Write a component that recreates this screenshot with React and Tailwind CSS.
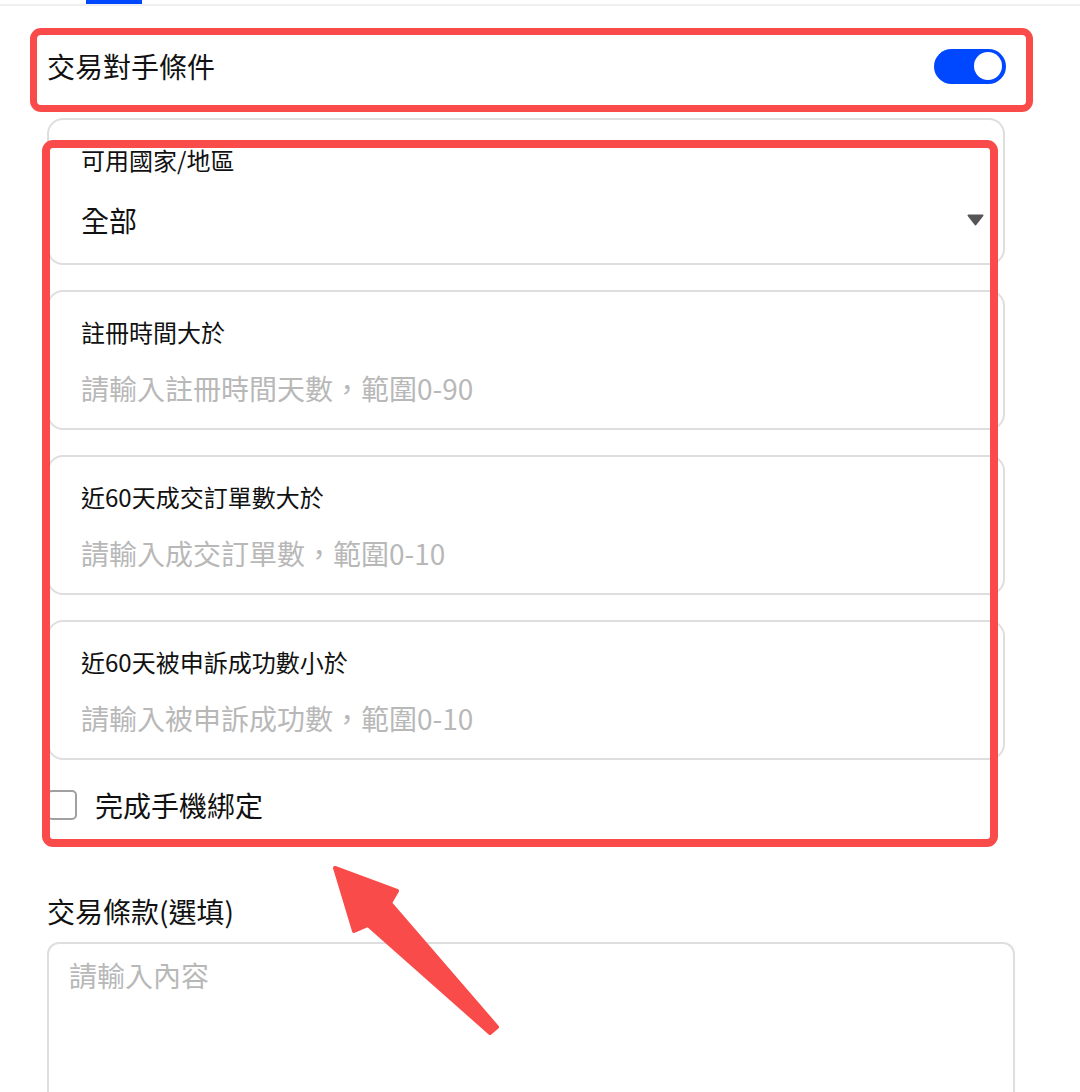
import { useState } from 'react';

const font = { fontFamily: '"Noto Sans CJK TC", "Noto Sans", sans-serif' };

function Field({ label, placeholder }) {
  return (
    <div className="border-2 border-[#dedede] rounded-[16px] px-[32px] pt-[24px] pb-[20px]">
      <div className="text-[24px] leading-[32px] text-[#111]">{label}</div>
      <input
        type="text"
        placeholder={placeholder}
        className="mt-[20px] block w-full h-[40px] text-[28px] leading-[40px] text-[#111] placeholder:text-[#b8b8b8] outline-none bg-transparent"
      />
    </div>
  );
}

export default function App() {
  const [on, setOn] = useState(true);
  const [bound, setBound] = useState(false);

  return (
    <div className="relative w-[1080px] h-[1092px] overflow-hidden bg-white" style={font}>
      {/* tab underline */}
      <div className="relative h-[6px] border-b-2 border-[#f0f0f0]">
        <div className="absolute left-[86px] top-0 w-[56px] h-[4px] bg-[#0048ff]" />
      </div>

      <div className="pl-[47px]">
        <div className="mt-[32px] h-[56px] flex items-center justify-between pr-[74px]">
          <span className="text-[28px] text-[#111]">交易對手條件</span>
          <button
            onClick={() => setOn(!on)}
            className={`w-[72px] h-[35px] rounded-full flex items-center px-[4px] ${on ? 'bg-[#0048ff] justify-end' : 'bg-[#ccc] justify-start'}`}
          >
            <span className="w-[28px] h-[28px] rounded-full bg-white" />
          </button>
        </div>

        <div className="w-[958px] mt-[24px] flex flex-col gap-[25px]">
          <div className="border-2 border-[#dedede] rounded-[16px] px-[32px] pt-[24px] pb-[23px]">
            <div className="text-[24px] leading-[32px] text-[#111]">可用國家/地區</div>
            <div className="mt-[24px] h-[40px] flex items-center justify-between">
              <span className="text-[28px] leading-[40px] text-[#111]">全部</span>
              <svg width="17" height="12" viewBox="0 0 17 12" className="mr-[-13px]">
                <path d="M1.5 1.5 H15.5 L8.5 10.5 Z" fill="#555" stroke="#555" strokeWidth="2" strokeLinejoin="round" />
              </svg>
            </div>
          </div>
          <Field label="註冊時間大於" placeholder="請輸入註冊時間天數，範圍0-90" />
          <Field label="近60天成交訂單數大於" placeholder="請輸入成交訂單數，範圍0-10" />
          <Field label="近60天被申訴成功數小於" placeholder="請輸入被申訴成功數，範圍0-10" />
        </div>

        <label className="mt-[30px] flex items-center h-[30px] cursor-pointer">
          <span
            onClick={() => setBound(!bound)}
            className={`w-[30px] h-[30px] rounded-[5px] border-2 ${bound ? 'border-[#0048ff] bg-[#0048ff]' : 'border-[#a0a0a0] bg-white'}`}
          />
          <span className="ml-[18px] text-[28px] text-[#111]">完成手機綁定</span>
        </label>

        <div className="mt-[71px] text-[28px] leading-[40px] text-[#111]">交易條款(選填)</div>
        <div className="mt-[11px] w-[968px] h-[200px] border-2 border-[#dedede] rounded-[12px] px-[20px] pt-[11px]">
          <textarea
            placeholder="請輸入內容"
            className="block w-full h-full resize-none text-[28px] leading-[40px] text-[#111] placeholder:text-[#b8b8b8] outline-none"
          />
        </div>
      </div>

      {/* annotations */}
      <div className="absolute left-[30px] top-[28px] w-[1003px] h-[84px] border-[7px] border-[#f84b4a] rounded-[11px] pointer-events-none" />
      <div className="absolute left-[42px] top-[140px] w-[956px] h-[707px] border-[8px] border-[#f84b4a] rounded-[11px] pointer-events-none" />
      <svg className="absolute left-0 top-0 pointer-events-none" width="1080" height="1092">
        <polygon
          points="335,868 397,891 390,903 497,1027 490,1033 368,925 354,931"
          fill="#f84b4a"
          stroke="#f84b4a"
          strokeWidth="4"
          strokeLinejoin="round"
        />
      </svg>
    </div>
  );
}
